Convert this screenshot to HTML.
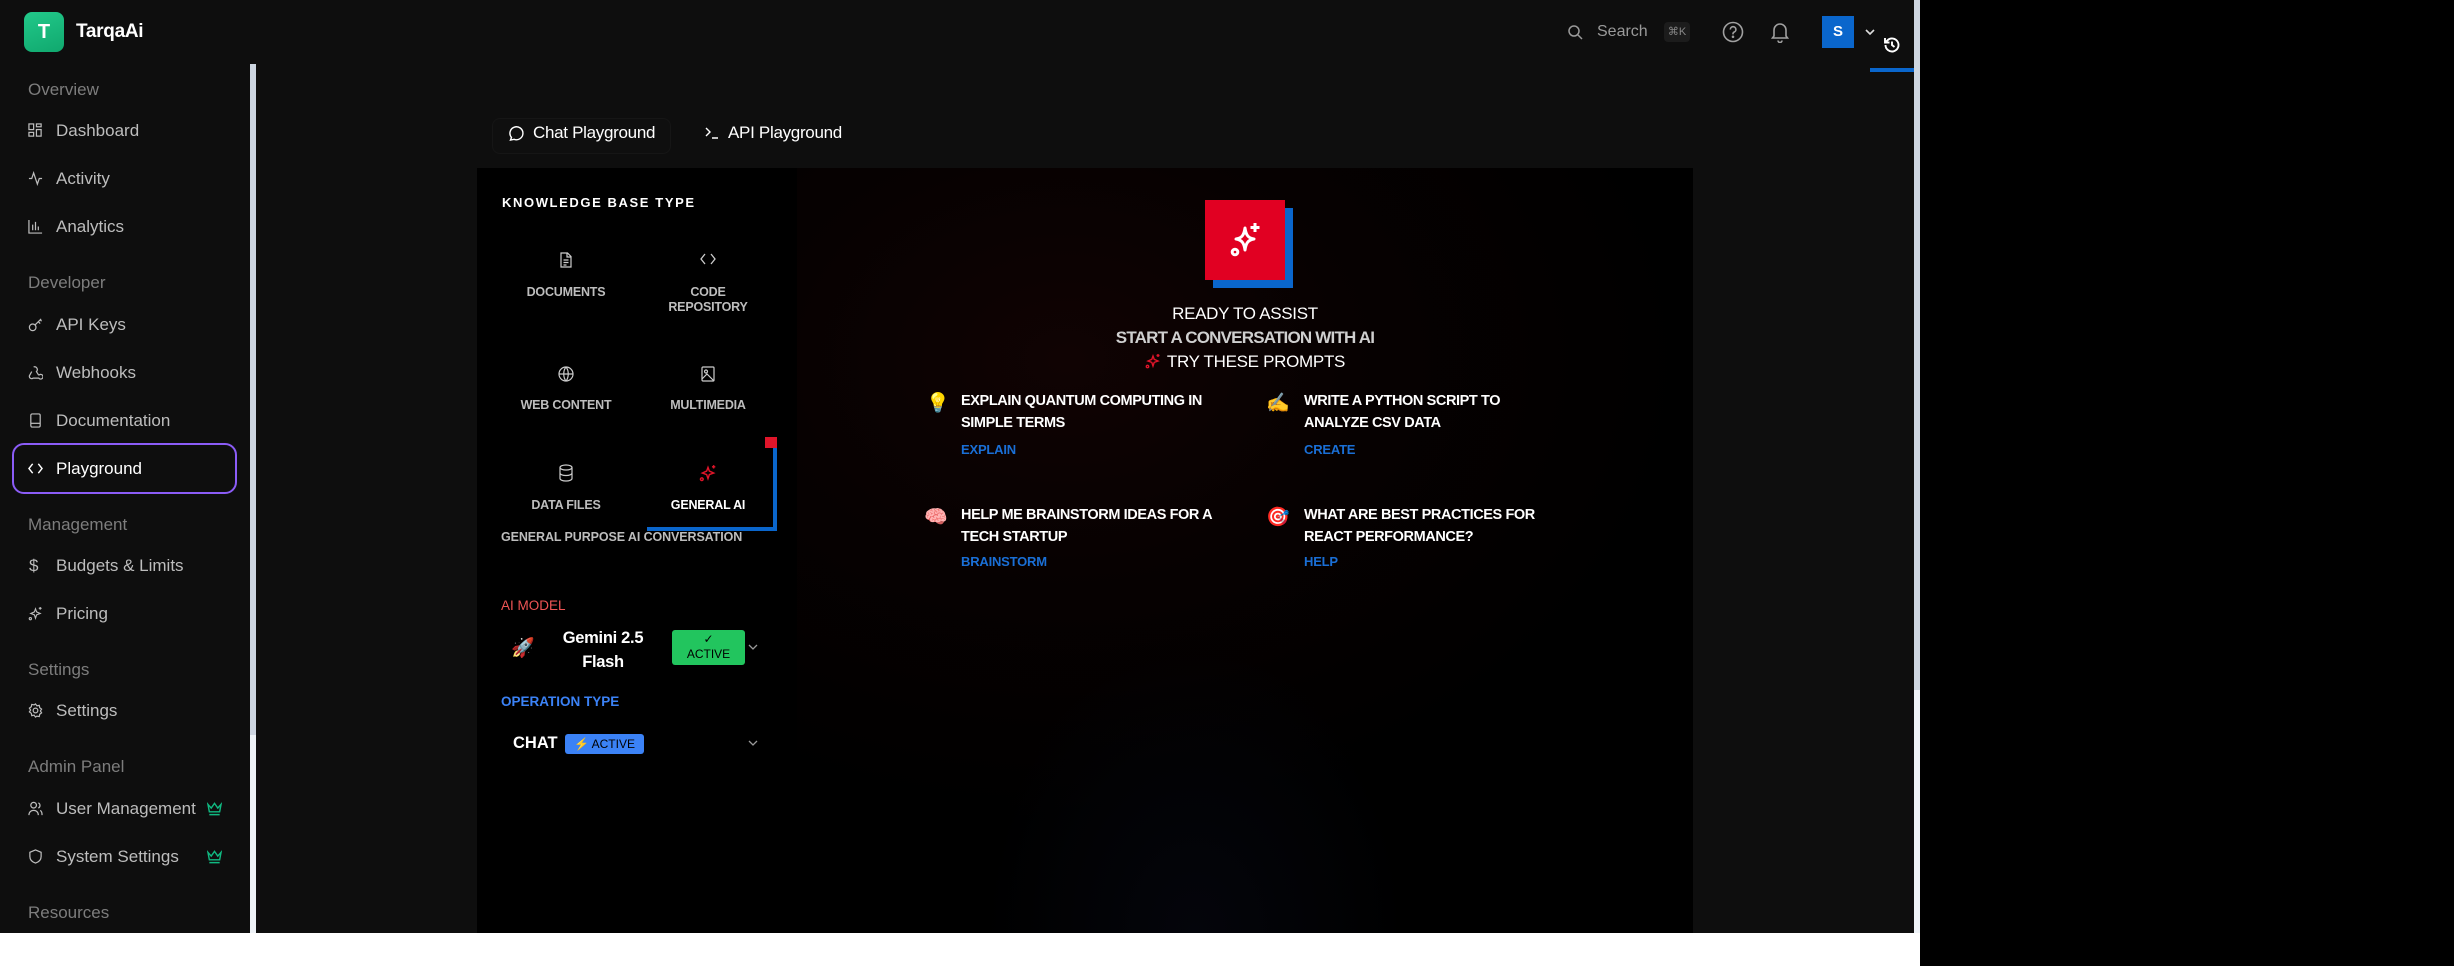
<!DOCTYPE html>
<html><head><meta charset="utf-8">
<style>
*{box-sizing:border-box;margin:0;padding:0}
html,body{width:2454px;height:966px;background:#000;overflow:hidden;font-family:"Liberation Sans",sans-serif}
.abs{position:absolute}
#app{position:absolute;left:0;top:0;width:1920px;height:933px;background:#0e0e0e;overflow:hidden}
#white{position:absolute;left:0;top:933px;width:1920px;height:33px;background:#fff}
.side{color:#bdbdbd;font-size:17px;white-space:nowrap}
.sec{color:#7d7d7d;font-size:17px;white-space:nowrap}
svg{display:block}
.ico{position:absolute;left:28px;width:15px;height:15px}
.up{text-transform:uppercase;font-weight:bold;white-space:nowrap}
.kb{position:absolute;color:#bdbdbd;font-size:12.5px;font-weight:bold;text-align:center;width:150px;line-height:15px;letter-spacing:-.2px}
.pr{position:absolute;color:#fff;font-size:14.5px;font-weight:bold;line-height:22px;width:270px;letter-spacing:-.4px}
.lb{position:absolute;color:#1a6fd6;font-size:13px;font-weight:bold;letter-spacing:-.2px}
.em{position:absolute;font-size:19px;font-family:"Noto Color Emoji","DejaVu Sans",sans-serif}
</style></head><body>
<div id="app">
  <div class="abs" style="left:24px;top:12px;width:40px;height:40px;border-radius:8px;background:linear-gradient(160deg,#22c98a,#10a86e);color:#fff;font-size:20px;font-weight:bold;text-align:center;line-height:40px">T</div>
  <div class="abs" style="left:76px;top:21px;color:#fff;font-size:19px;font-weight:bold;letter-spacing:-.3px">TarqaAi</div>
  <div class="abs" style="left:250px;top:64px;width:6px;height:869px;background:#eef2f7"></div>
  <div class="abs" style="left:250px;top:64px;width:6px;height:671px;background:#cdd5e0"></div>

  <div class="abs sec" style="left:28px;top:80px">Overview</div>
  <svg class="ico" style="top:123px" viewBox="0 0 16 16" fill="none" stroke="#bdbdbd" stroke-width="1.3"><rect x="1" y="1" width="5" height="6"/><rect x="9" y="1" width="5" height="3"/><rect x="9" y="7" width="5" height="7"/><rect x="1" y="10" width="5" height="4"/></svg>
  <div class="abs side" style="left:56px;top:121px">Dashboard</div>
  <svg class="ico" style="top:171px" viewBox="0 0 16 16" fill="none" stroke="#bdbdbd" stroke-width="1.3"><path d="M1 8h3l2-6 4 12 2-6h3"/></svg>
  <div class="abs side" style="left:56px;top:169px">Activity</div>
  <svg class="ico" style="top:219px" viewBox="0 0 16 16" fill="none" stroke="#bdbdbd" stroke-width="1.3"><path d="M1 1v14h14M5 12V6M8 12V3M11 12V8"/></svg>
  <div class="abs side" style="left:56px;top:217px">Analytics</div>

  <div class="abs sec" style="left:28px;top:273px">Developer</div>
  <svg class="ico" style="top:317px" viewBox="0 0 16 16" fill="none" stroke="#bdbdbd" stroke-width="1.3"><circle cx="5" cy="11" r="3.5"/><path d="M7.5 8.5L14 2M11 5l2 2M13 3l1.5 1.5"/></svg>
  <div class="abs side" style="left:56px;top:315px">API Keys</div>
  <svg class="ico" style="top:365px" viewBox="0 0 16 16" fill="none" stroke="#bdbdbd" stroke-width="1.3"><path d="M6 2a3 3 0 0 1 3 5l2.5 4M4 7l-2.5 4.5a2.5 2.5 0 0 0 4 2.5h6a2.5 2.5 0 1 0 0-3"/></svg>
  <div class="abs side" style="left:56px;top:363px">Webhooks</div>
  <svg class="ico" style="top:413px" viewBox="0 0 16 16" fill="none" stroke="#bdbdbd" stroke-width="1.3"><rect x="3" y="1" width="10" height="14" rx="1.5"/><path d="M3 11h10"/></svg>
  <div class="abs side" style="left:56px;top:411px">Documentation</div>
  <div class="abs" style="left:12px;top:443px;width:225px;height:51px;border:2px solid #8b5cf6;border-radius:12px"></div>
  <svg class="ico" style="top:461px" viewBox="0 0 16 16" fill="none" stroke="#fff" stroke-width="1.5"><path d="M5 3L1 8l4 5M11 3l4 5-4 5"/></svg>
  <div class="abs side" style="left:56px;top:459px;color:#fff">Playground</div>

  <div class="abs sec" style="left:28px;top:515px">Management</div>
  <div class="abs side" style="left:29px;top:556px">$</div>
  <div class="abs side" style="left:56px;top:556px">Budgets &amp; Limits</div>
  <svg class="ico" style="top:606px" viewBox="0 0 16 16" fill="none" stroke="#bdbdbd" stroke-width="1.2"><path d="M8 3l1.2 3.3L13 8l-3.8 1.4L8 13l-1.2-3.6L3 8l3.8-1.7z"/><path d="M13 1v3M11.5 2.5h3"/><circle cx="2.5" cy="13.5" r="1.2"/></svg>
  <div class="abs side" style="left:56px;top:604px">Pricing</div>

  <div class="abs sec" style="left:28px;top:660px">Settings</div>
  <svg class="ico" style="top:703px" viewBox="0 0 16 16" fill="none" stroke="#bdbdbd" stroke-width="1.3"><circle cx="8" cy="8" r="2.5"/><path d="M8 1l1.5 2 2.5-.5.5 2.5 2 1.5-1.3 2 1.3 2-2 1.5-.5 2.5-2.5-.5L8 15l-1.5-2-2.5.5-.5-2.5-2-1.5 1.3-2-1.3-2 2-1.5.5-2.5 2.5.5z"/></svg>
  <div class="abs side" style="left:56px;top:701px">Settings</div>

  <div class="abs sec" style="left:28px;top:757px">Admin Panel</div>
  <svg class="ico" style="top:801px" viewBox="0 0 16 16" fill="none" stroke="#bdbdbd" stroke-width="1.3"><circle cx="6" cy="4.5" r="3"/><path d="M1 15c0-3 2-5 5-5s5 2 5 5M11 2a3 3 0 0 1 0 5.5M13 10c1.5.8 2 2.5 2 5"/></svg>
  <div class="abs side" style="left:56px;top:799px">User Management</div>
  <svg class="abs" style="left:207px;top:802px" width="15" height="14" viewBox="0 0 16 14" fill="none" stroke="#10b981" stroke-width="1.5"><path d="M1 2l3.5 4L8 1l3.5 5L15 2l-1.5 8h-11zM2.5 13h11"/></svg>
  <svg class="ico" style="top:849px" viewBox="0 0 16 16" fill="none" stroke="#bdbdbd" stroke-width="1.3"><path d="M8 1l6 2.5v4.5c0 4-3 6-6 7-3-1-6-3-6-7V3.5z"/></svg>
  <div class="abs side" style="left:56px;top:847px">System Settings</div>
  <svg class="abs" style="left:207px;top:850px" width="15" height="14" viewBox="0 0 16 14" fill="none" stroke="#10b981" stroke-width="1.5"><path d="M1 2l3.5 4L8 1l3.5 5L15 2l-1.5 8h-11zM2.5 13h11"/></svg>
  <div class="abs sec" style="left:28px;top:903px">Resources</div>

  <svg class="abs" style="left:1567px;top:24px" width="16" height="16" viewBox="0 0 16 16" fill="none" stroke="#9a9a9a" stroke-width="1.5"><circle cx="7" cy="7" r="5"/><path d="M11 11l4 4"/></svg>
  <div class="abs" style="left:1597px;top:23px;color:#9a9a9a;font-size:16px">Search</div>
  <div class="abs" style="left:1664px;top:22px;width:26px;height:20px;background:#1c1c1c;border-radius:4px;color:#888;font-size:11px;text-align:center;line-height:20px">⌘K</div>
  <svg class="abs" style="left:1722px;top:21px" width="22" height="22" viewBox="0 0 22 22" fill="none" stroke="#a0a0a0" stroke-width="1.6"><circle cx="11" cy="11" r="9.5"/><path d="M8.3 8.5a2.8 2.8 0 1 1 3.8 2.6c-.7.3-1.1.9-1.1 1.7v.6"/><circle cx="11" cy="15.8" r=".5" fill="#a0a0a0"/></svg>
  <svg class="abs" style="left:1770px;top:21px" width="20" height="22" viewBox="0 0 20 22" fill="none" stroke="#a0a0a0" stroke-width="1.6"><path d="M4 15V9a6 6 0 0 1 12 0v6l1.5 2h-15zM8 19.5a2 2 0 0 0 4 0"/></svg>
  <div class="abs" style="left:1822px;top:16px;width:32px;height:32px;background:#0a66cc;color:#fff;font-weight:bold;font-size:15px;text-align:center;line-height:32px">S</div>
  <svg class="abs" style="left:1864px;top:28px" width="12" height="8" viewBox="0 0 12 8" fill="none" stroke="#ddd" stroke-width="1.6"><path d="M2 2l4 4 4-4"/></svg>
  <svg class="abs" style="left:1882px;top:35px" width="20" height="20" viewBox="0 0 20 20" fill="none" stroke="#fff" stroke-width="1.9"><path d="M3.5 10a6.5 6.5 0 1 0 2-4.7L3 7.5M3 3v4.5h4.5M10 6.5V10l2.5 2"/></svg>
  <div class="abs" style="left:1870px;top:68px;width:44px;height:4px;background:#0a66cc"></div>
  <div class="abs" style="left:1914px;top:0;width:6px;height:933px;background:#eef2f7"></div>
  <div class="abs" style="left:1914px;top:0;width:6px;height:690px;background:#cdd5e0"></div>

  <div class="abs" style="left:492px;top:118px;width:179px;height:36px;border:1px solid #161616;border-radius:8px;background:#0f0f0f"></div>
  <svg class="abs" style="left:509px;top:125px" width="16" height="16" viewBox="0 0 16 16" fill="none" stroke="#fff" stroke-width="1.4"><path d="M2.5 12.5A6.5 6.5 0 1 1 5 14.3L1.5 15z"/></svg>
  <div class="abs" style="left:533px;top:123px;color:#fff;font-size:17px;letter-spacing:-.3px">Chat Playground</div>
  <svg class="abs" style="left:705px;top:127px" width="14" height="12" viewBox="0 0 14 12" fill="none" stroke="#fff" stroke-width="1.4"><path d="M1 1l4 4-4 4M7 11h6"/></svg>
  <div class="abs" style="left:728px;top:123px;color:#fff;font-size:17px;letter-spacing:-.3px">API Playground</div>

  <div class="abs" style="left:477px;top:168px;width:1216px;height:765px;background:#000"></div>
  <div class="abs" style="left:797px;top:168px;width:896px;height:765px;background:radial-gradient(ellipse 70% 60% at 30% 25%,#100303 0%,#070101 45%,#000 100%)"></div>
  <div class="abs" style="left:980px;top:650px;width:430px;height:283px;background:radial-gradient(ellipse at 50% 100%,#04050b 0%,transparent 70%)"></div>

  <div class="abs up" style="left:502px;top:195px;color:#fff;font-size:13px;letter-spacing:1.6px">Knowledge Base Type</div>

  <svg class="abs" style="left:560px;top:252px" width="12" height="16" viewBox="0 0 12 16" fill="none" stroke="#ccc" stroke-width="1.2"><path d="M1 1h6.5L11 4.5V15H1zM7 1v4h4M3.5 8h5M3.5 10.5h5M3.5 13h3"/></svg>
  <div class="kb" style="left:491px;top:285px">DOCUMENTS</div>
  <svg class="abs" style="left:700px;top:253px" width="16" height="12" viewBox="0 0 16 12" fill="none" stroke="#ccc" stroke-width="1.3"><path d="M5 1L1 6l4 5M11 1l4 5-4 5"/></svg>
  <div class="kb" style="left:633px;top:285px">CODE<br>REPOSITORY</div>
  <svg class="abs" style="left:558px;top:366px" width="16" height="16" viewBox="0 0 16 16" fill="none" stroke="#ccc" stroke-width="1.2"><circle cx="8" cy="8" r="7"/><path d="M1 8h14M8 1c-3 3.5-3 10.5 0 14M8 1c3 3.5 3 10.5 0 14"/></svg>
  <div class="kb" style="left:491px;top:398px">WEB CONTENT</div>
  <svg class="abs" style="left:701px;top:366px" width="14" height="16" viewBox="0 0 14 16" fill="none" stroke="#ccc" stroke-width="1.2"><rect x="1" y="1" width="12" height="14" rx="1"/><circle cx="5" cy="5.5" r="1.5"/><path d="M1 13l5-5 7 7"/></svg>
  <div class="kb" style="left:633px;top:398px">MULTIMEDIA</div>
  <svg class="abs" style="left:559px;top:464px" width="14" height="18" viewBox="0 0 14 18" fill="none" stroke="#ccc" stroke-width="1.2"><ellipse cx="7" cy="3.5" rx="6" ry="2.5"/><path d="M1 3.5v11c0 1.4 2.7 2.5 6 2.5s6-1.1 6-2.5v-11M1 9c0 1.4 2.7 2.5 6 2.5S13 10.4 13 9"/></svg>
  <div class="kb" style="left:491px;top:498px">DATA FILES</div>
  <svg class="abs" style="left:699px;top:464px" width="18" height="18" viewBox="0 0 16 16" fill="none" stroke="#e0152a" stroke-width="1.3"><path d="M8 3l1.2 3.3L13 8l-3.8 1.4L8 13l-1.2-3.6L3 8l3.8-1.7z"/><path d="M13 1v3M11.5 2.5h3"/><circle cx="2.5" cy="13.5" r="1.2"/></svg>
  <div class="kb" style="left:633px;top:498px;color:#fff">GENERAL AI</div>
  <div class="abs" style="left:765px;top:437px;width:12px;height:11px;background:#e0152a"></div>
  <div class="abs" style="left:773px;top:448px;width:4px;height:83px;background:#0a66cc"></div>
  <div class="abs" style="left:647px;top:527px;width:130px;height:4px;background:#0a66cc"></div>
  <div class="abs up" style="left:501px;top:530px;color:#bdbdbd;font-size:12.5px;letter-spacing:-.1px">General purpose AI conversation</div>

  <div class="abs up" style="left:501px;top:598px;color:#f05555;font-size:13.5px;font-weight:normal">AI MODEL</div>
  <div class="em" style="left:511px;top:636px">🚀</div>
  <div class="abs" style="left:548px;top:626px;width:110px;text-align:center;color:#fff;font-size:16.5px;font-weight:bold;line-height:24px;letter-spacing:-.3px">Gemini 2.5<br>Flash</div>
  <div class="abs" style="left:672px;top:630px;width:73px;height:35px;background:#22c55e;border-radius:3px;color:#000;font-size:12px;text-align:center;line-height:15px;padding-top:2px">✓<br>ACTIVE</div>
  <svg class="abs" style="left:748px;top:644px" width="10" height="7" viewBox="0 0 10 7" fill="none" stroke="#999" stroke-width="1.3"><path d="M1 1l4 4 4-4"/></svg>

  <div class="abs up" style="left:501px;top:694px;color:#3b82f6;font-size:13.5px">OPERATION TYPE</div>
  <div class="abs" style="left:513px;top:734px;color:#fff;font-size:16.5px;font-weight:bold">CHAT</div>
  <div class="abs" style="left:565px;top:734px;width:79px;height:20px;background:#3b82f6;border-radius:3px;color:#000;font-size:12px;text-align:center;line-height:20px"><span style="color:#facc15">⚡</span> ACTIVE</div>
  <svg class="abs" style="left:748px;top:740px" width="10" height="7" viewBox="0 0 10 7" fill="none" stroke="#999" stroke-width="1.3"><path d="M1 1l4 4 4-4"/></svg>

  <div class="abs" style="left:1213px;top:208px;width:80px;height:80px;background:#0a66cc"></div>
  <div class="abs" style="left:1205px;top:200px;width:80px;height:80px;background:#e10022"></div>
  <svg class="abs" style="left:1225px;top:220px" width="40" height="40" viewBox="0 0 40 40" fill="none" stroke="#fff" stroke-width="3" stroke-linejoin="round"><path d="M20 8c1 7 3 10 9 11-6 1-8 4-9 11-1-7-3-10-9-11 6-1 8-4 9-11z"/><path d="M30 3v9M25.5 7.5h9"/><circle cx="10" cy="32" r="2.8"/></svg>
  <div class="abs" style="left:1045px;top:304px;width:400px;text-align:center;color:#fff;font-size:17px;letter-spacing:-.3px">READY TO ASSIST</div>
  <div class="abs" style="left:1045px;top:328px;width:400px;text-align:center;color:#cfcfcf;font-size:17px;font-weight:bold;letter-spacing:-.8px">START A CONVERSATION WITH AI</div>
  <div class="abs" style="left:1045px;top:352px;width:400px;text-align:center;color:#fff;font-size:17px;letter-spacing:-.3px"><svg style="display:inline-block;vertical-align:-2px;margin-right:6px" width="16" height="16" viewBox="0 0 16 16" fill="none" stroke="#e0152a" stroke-width="1.4"><path d="M8 3l1.2 3.3L13 8l-3.8 1.4L8 13l-1.2-3.6L3 8l3.8-1.7z"/><path d="M13 1v3M11.5 2.5h3"/><circle cx="2.5" cy="13.5" r="1.2"/></svg>TRY THESE PROMPTS</div>

  <div class="em" style="left:926px;top:391px">💡</div>
  <div class="pr" style="left:961px;top:390px">EXPLAIN QUANTUM COMPUTING IN SIMPLE TERMS</div>
  <div class="lb" style="left:961px;top:442px">EXPLAIN</div>
  <div class="em" style="left:1266px;top:391px">✍️</div>
  <div class="pr" style="left:1304px;top:390px;width:240px">WRITE A PYTHON SCRIPT TO ANALYZE CSV DATA</div>
  <div class="lb" style="left:1304px;top:442px">CREATE</div>
  <div class="em" style="left:924px;top:505px">🧠</div>
  <div class="pr" style="left:961px;top:504px">HELP ME BRAINSTORM IDEAS FOR A TECH STARTUP</div>
  <div class="lb" style="left:961px;top:554px">BRAINSTORM</div>
  <div class="em" style="left:1266px;top:505px">🎯</div>
  <div class="pr" style="left:1304px;top:504px;width:280px">WHAT ARE BEST PRACTICES FOR REACT PERFORMANCE?</div>
  <div class="lb" style="left:1304px;top:554px">HELP</div>
</div>
<div id="white"></div>
</body></html>
